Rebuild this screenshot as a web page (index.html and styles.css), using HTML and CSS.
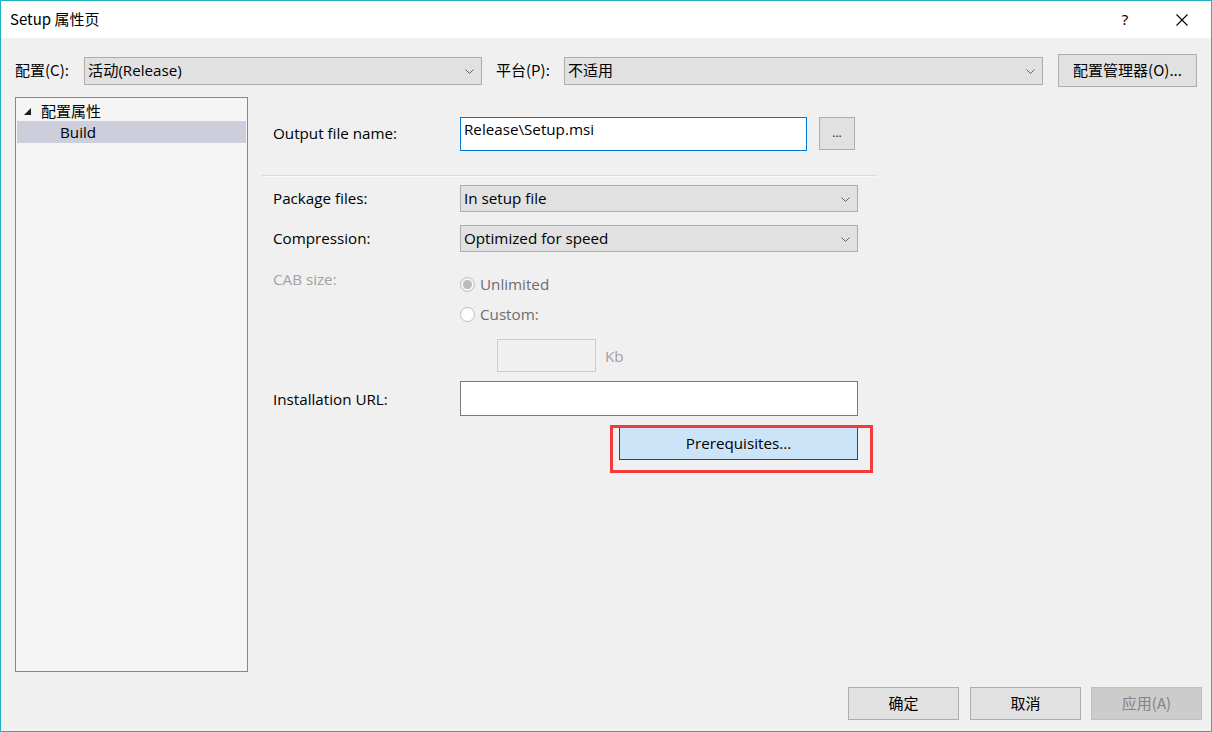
FILE: index.html
```html
<!DOCTYPE html>
<html lang="zh-CN">
<head>
<meta charset="utf-8">
<title>Setup 属性页</title>
<link rel="stylesheet" href="styles.css">
</head>
<body>
<div class="window">
  <div class="titlebar">
    <div class="title">Setup 属性页</div>
    <div class="tb-btn help">?</div>
    <div class="tb-btn close">
      <svg width="12" height="12" viewBox="0 0 12 12"><path d="M0.5 0.5 L11.5 11.5 M11.5 0.5 L0.5 11.5" stroke="#000" stroke-width="1.1" fill="none"/></svg>
    </div>
  </div>

  <div class="toolbar">
    <span class="tlabel">配置(C):</span>
    <div class="combo combo-config">
      <span>活动(Release)</span>
      <svg class="chev" width="9" height="5" viewBox="0 0 9 5"><path d="M0.5 0.5 L4.5 4.5 L8.5 0.5" stroke="#606060" fill="none"/></svg>
    </div>
    <span class="tlabel plat">平台(P):</span>
    <div class="combo combo-plat">
      <span>不适用</span>
      <svg class="chev" width="9" height="5" viewBox="0 0 9 5"><path d="M0.5 0.5 L4.5 4.5 L8.5 0.5" stroke="#606060" fill="none"/></svg>
    </div>
    <div class="btn btn-mgr">配置管理器(O)...</div>
  </div>

  <div class="main">
    <div class="tree">
      <div class="tree-item root">
        <svg class="tri" width="7" height="7" viewBox="0 0 7 7"><polygon points="7,0 7,7 0,7" fill="#1e1e1e"/></svg>
        <span>配置属性</span>
      </div>
      <div class="tree-item sel"><span>Build</span></div>
    </div>

    <div class="content">
      <div class="row r-output">
        <div class="label">Output file name:</div>
        <div class="input focus">Release\Setup.msi</div>
        <div class="btn btn-dots">...</div>
      </div>

      <div class="sep"></div>

      <div class="row r-pkg">
        <div class="label">Package files:</div>
        <div class="combo combo-wide">
          <span>In setup file</span>
          <svg class="chev" width="9" height="5" viewBox="0 0 9 5"><path d="M0.5 0.5 L4.5 4.5 L8.5 0.5" stroke="#606060" fill="none"/></svg>
        </div>
      </div>

      <div class="row r-comp">
        <div class="label">Compression:</div>
        <div class="combo combo-wide">
          <span>Optimized for speed</span>
          <svg class="chev" width="9" height="5" viewBox="0 0 9 5"><path d="M0.5 0.5 L4.5 4.5 L8.5 0.5" stroke="#606060" fill="none"/></svg>
        </div>
      </div>

      <div class="row r-cab">
        <div class="label disabled cab-label">CAB size:</div>
        <div class="radio-wrap">
          <span class="radio checked"></span>
          <span class="radio-text">Unlimited</span>
        </div>
      </div>

      <div class="row r-custom">
        <div class="label"></div>
        <div class="radio-wrap">
          <span class="radio"></span>
          <span class="radio-text">Custom:</span>
        </div>
      </div>

      <div class="row r-kb">
        <div class="label"></div>
        <div class="kb-input"></div>
        <span class="kb-text">Kb</span>
      </div>

      <div class="row r-url">
        <div class="label">Installation URL:</div>
        <div class="input url"></div>
      </div>

      <div class="row r-prereq">
        <div class="label"></div>
        <div class="prereq-wrap">
          <div class="btn btn-prereq">Prerequisites...</div>
          <div class="highlight"></div>
        </div>
      </div>
    </div>
  </div>

  <div class="footer">
    <div class="btn btn-foot">确定</div>
    <div class="btn btn-foot">取消</div>
    <div class="btn btn-foot disabled-btn">应用(A)</div>
  </div>
</div>
</body>
</html>
```

FILE: styles.css
```css
* { box-sizing: border-box; }
html, body { margin: 0; padding: 0; }
body {
  font-family: "Open Sans", "Noto Sans CJK SC", sans-serif;
  font-size: 15.2px;
  color: #000;
  background: #f0f0f0;
}
.window {
  width: 1212px;
  height: 732px;
  border: 1px solid #1fb1c3;
  background: #f0f0f0;
  display: flex;
  flex-direction: column;
  overflow: hidden;
}
.titlebar {
  height: 37px;
  background: #fff;
  display: flex;
  align-items: center;
  flex: none;
}
.title {
  flex: 1;
  padding-left: 9px;
  font-family: "Noto Sans CJK SC", "Open Sans", sans-serif;
  font-size: 15px;
  line-height: 20px;
  padding-bottom: 1px;
}
.tb-btn {
  height: 37px;
  display: flex;
  align-items: center;
  justify-content: center;
}
.help {
  width: 46px;
  font-family: "Noto Sans", sans-serif;
  font-size: 15px;
  margin-right: 11px;
  padding-bottom: 2px;
}
.close { width: 46px; padding-top: 1px; margin-right: 6px; }

.toolbar {
  flex: none;
  display: flex;
  align-items: center;
  padding: 16px 13px 0 14px;
  height: 49px;
}
.tlabel {
  font-family: "Noto Sans CJK SC", sans-serif;
  font-size: 15px;
  line-height: 20px;
  width: 69px;
  padding-bottom: 1px;
}
.tlabel.plat { width: 68px; margin-left: 14px; }
.combo {
  height: 28px;
  background: #e1e1e1;
  border: 1px solid #adadad;
  display: flex;
  align-items: center;
  justify-content: space-between;
  padding: 0 7px 0 3px;
  line-height: 20px;
}
.combo span { padding-bottom: 1px; }
.combo-config { width: 398px; }
.combo-plat { width: 479px; font-family: "Noto Sans CJK SC", sans-serif; font-size: 15px; }
.chev { flex: none; margin-top: 1px; }

.btn {
  background: #e1e1e1;
  border: 1px solid #adadad;
  display: flex;
  align-items: center;
  justify-content: center;
  line-height: 20px;
}
.btn-mgr {
  width: 139px;
  height: 33px;
  margin-left: 15px;
  font-family: "Noto Sans CJK SC", "Open Sans", sans-serif;
  font-size: 15px;
  padding-bottom: 1px;
}

.main {
  flex: none;
  height: 575px;
  margin-top: 10px;
  display: flex;
  padding-left: 14px;
}
.tree {
  width: 233px;
  height: 575px;
  background: #f5f5f5;
  border: 1px solid #828790;
  padding: 3px 1px 2px;
}
.tree-item {
  height: 21px;
  display: flex;
  align-items: center;
  line-height: 20px;
}
.tree-item.root {
  padding-left: 7px;
  font-family: "Noto Sans CJK SC", sans-serif;
  font-size: 15px;
  height: 20px;
}
.tree-item.root .tri { margin-right: 10px; margin-top: 1px; }
.tree-item.sel {
  background: #cccedb;
  padding-left: 43px;
  height: 22px;
}

.content {
  flex: 1;
  padding-left: 25px;
  display: flex;
  flex-direction: column;
}
.row {
  display: flex;
  align-items: center;
  flex: none;
}
.label {
  width: 187px;
  flex: none;
  line-height: 20px;
}
.label.disabled { color: #a2a2a2; }
.r-output { margin-top: 20px; height: 34px; }
.r-output .label { margin-top: -3px; }
.input {
  background: #fff;
  border: 1px solid #7a7a7a;
  line-height: 20px;
}
.input.focus {
  width: 347px;
  height: 34px;
  border-color: #0078d7;
  padding: 1px 3px;
  align-self: flex-start;
}
.btn-dots {
  width: 36px;
  height: 33px;
  margin-left: 12px;
  font-size: 12px;
  color: #1a1a1a;
  align-self: flex-start;
  padding-bottom: 2px;
}
.sep {
  margin-top: 24px;
  margin-left: -11px;
  width: 615px;
  height: 2px;
  border-top: 1px solid #dadada;
  border-bottom: 1px solid #f8f8f8;
  flex: none;
}
.r-pkg { margin-top: 8px; height: 27px; }
.r-comp { margin-top: 13px; height: 27px; }
.combo-wide { width: 398px; height: 27px; }
.r-comp .label, .r-pkg .label { padding-bottom: 1px; }

.r-cab { margin-top: 22px; height: 20px; align-items: flex-start; }
.cab-label { margin-top: -5px; }
.r-custom { margin-top: 10px; height: 20px; }
.radio-wrap {
  display: flex;
  align-items: center;
  height: 20px;
}
.radio {
  width: 15px;
  height: 15px;
  border: 1px solid #bcbcbc;
  border-radius: 50%;
  background: #fff;
  margin-right: 5px;
  display: flex;
  align-items: center;
  justify-content: center;
}
.radio.checked { background: #f4f4f4; }
.radio.checked::after {
  content: "";
  width: 9px;
  height: 9px;
  border-radius: 50%;
  background: #bcbcbc;
}
.radio-text { color: #6d6d6d; line-height: 20px; }

.r-kb { margin-top: 15px; height: 33px; }
.kb-input {
  width: 99px;
  height: 33px;
  margin-left: 37px;
  border: 1px solid #cccccc;
  background: #f0f0f0;
}
.kb-text { color: #a2a2a2; margin-left: 9px; line-height: 20px; }

.r-url { margin-top: 9px; height: 35px; }
.input.url { width: 398px; height: 35px; }

.r-prereq { margin-top: 11px; height: 33px; }
.prereq-wrap {
  position: relative;
  margin-left: 159px;
}
.btn-prereq {
  width: 239px;
  height: 33px;
  background: #cce4f7;
  border: 1px solid #005499;
  padding-bottom: 1px;
}
.highlight {
  position: absolute;
  left: -9px;
  top: -2px;
  width: 263px;
  height: 48px;
  border: 3px solid #f43a3a;
  pointer-events: none;
}

.footer {
  flex: none;
  display: flex;
  justify-content: flex-end;
  padding: 15px 9px 0 0;
  gap: 10px;
}
.btn-foot {
  width: 111px;
  height: 33px;
  font-family: "Noto Sans CJK SC", "Open Sans", sans-serif;
  font-size: 15px;
  padding-bottom: 1px;
}
.btn-foot:first-child { margin-right: 1px; }
.disabled-btn {
  background: #cccccc;
  border-color: #bfbfbf;
  color: #838383;
}
```
